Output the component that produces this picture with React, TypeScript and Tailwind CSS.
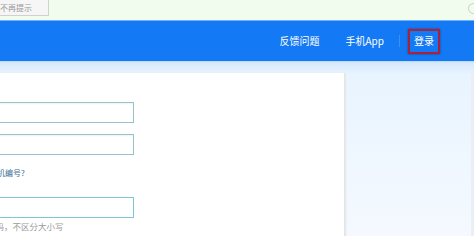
import React from "react";

export default function App() {
  const font = { fontFamily: '"Noto Sans CJK SC", "Noto Sans", sans-serif' };
  return (
    <div
      className="w-[474px] h-[236px] overflow-hidden flex flex-col bg-white"
      style={font}
    >
      {/* top notice bar */}
      <div className="h-[20px] shrink-0 bg-[#f1fcee] flex items-start justify-between">
        <div className="h-[16px] w-[49px] border border-l-0 border-t-0 border-[#cfd3cf] bg-[#f5f6f5] text-[8px] leading-[15px] text-[#9a9a9a] pl-0">
          不再提示
        </div>
        <div className="mt-[3px] mr-[-5px] w-[11px] h-[11px] rounded-full border border-[#c9cec9]" />
      </div>

      {/* blue header */}
      <div className="h-[41px] shrink-0 bg-[#1479f4] border-t border-[#6fb0fa] flex items-center justify-end pr-[34px] text-white text-[10px] leading-none">
        <span>反馈问题</span>
        <span className="ml-[26px]">手机App</span>
        <span className="ml-[15px] w-px h-[12px] bg-[#3f8ff3]" />
        <span className="ml-[8px] h-[25px] px-[4px] flex items-center border-2 border-[#a82238] shadow-[0_0_2px_rgba(80,0,20,0.5)]">
          登录
        </span>
      </div>

      {/* light band */}
      <div className="h-[12px] shrink-0 border-t border-[#b9dafb] bg-gradient-to-b from-[#d5e8fb] to-[#e6f2fe]" />

      {/* body */}
      <div className="flex-1 flex">
        <div className="w-[344px] shrink-0 bg-white flex flex-col pt-[29px]">
          <div className="ml-[-60px] w-[194px] h-[21px] border border-[#98c2d0] shadow-[inset_0_1px_2px_rgba(0,0,0,0.06)]" />
          <div className="mt-[11px] ml-[-60px] w-[194px] h-[21px] border border-[#98c2d0] shadow-[inset_0_1px_2px_rgba(0,0,0,0.06)]" />
          <div className="mt-[13px] ml-[-51px] text-[8px] leading-[10px] text-[#3c6d93] whitespace-nowrap">
            忘记账号或手机编号?
          </div>
          <div className="mt-[19px] ml-[-60px] w-[194px] h-[21px] border border-[#7fc6d4]" />
          <div className="mt-[3px] ml-[-47px] text-[8.5px] leading-[10px] text-[#9a9a9a] whitespace-nowrap">
            请输入验证码，不区分大小写
          </div>
        </div>
        <div className="flex-1 flex">
          <div className="w-[3px] bg-gradient-to-r from-[#e2e2e2] to-[#eef4fa]" />
          <div className="flex-1 bg-gradient-to-b from-[#e8f4ff] to-[#f5f9ff]" />
          <div className="w-[3px] bg-[#e9eff5]" />
        </div>
      </div>
    </div>
  );
}
